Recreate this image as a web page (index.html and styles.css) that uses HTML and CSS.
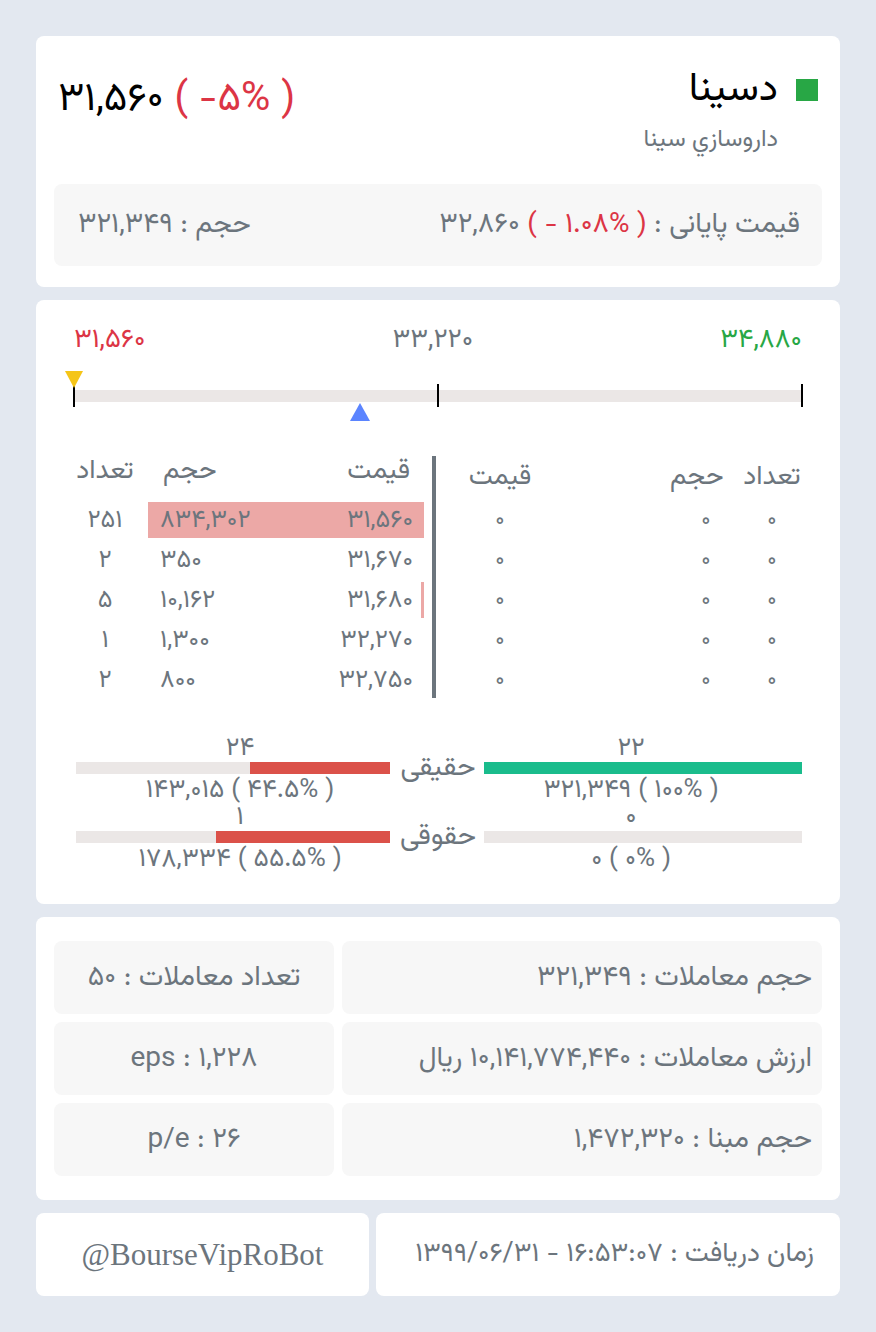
FILE: index.html
```html
<!DOCTYPE html>
<html lang="fa">
<head>
    <meta charset="UTF-8">
    <meta name="viewport" content="width=device-width, initial-scale=1.0">
    <title>دسینا</title>
    <link rel="stylesheet" href="styles.css">
</head>
<body>
    <!-- Symbol header -->
    <section class="card card-head">
        <div class="head-row">
            <div class="last-price" dir="ltr">۳۱,۵۶۰ <span class="red">( -۵% )</span></div>
            <div class="symbol">
                <div class="symbol-title">
                    <span dir="rtl">دسینا</span>
                    <span class="status-dot"></span>
                </div>
                <div class="symbol-name" dir="rtl">داروسازي سينا</div>
            </div>
        </div>
        <div class="close-box">
            <span dir="rtl">حجم : ۳۲۱,۳۴۹</span>
            <span dir="ltr">۳۲,۸۶۰ <span class="red">( - ۱.۰۸% )</span> : قیمت پایانی</span>
        </div>
    </section>

    <!-- Range + order book + buyer types -->
    <section class="card card-book">
        <div class="range-labels">
            <span class="red">۳۱,۵۶۰</span>
            <span>۳۳,۲۲۰</span>
            <span class="green">۳۴,۸۸۰</span>
        </div>
        <div class="range">
            <div class="range-track"></div>
            <span class="tick" style="left: 0%"></span>
            <span class="tick" style="left: 50%"></span>
            <span class="tick" style="left: 100%"></span>
            <span class="marker-last" style="left: 0%"></span>
            <span class="marker-close" style="left: 39.3%"></span>
        </div>

        <div class="book">
            <div class="book-side sell">
                <div class="book-row book-head">
                    <span class="c-count">تعداد</span>
                    <div class="c-bar">
                        <span class="c-vol">حجم</span>
                        <span class="c-price">قیمت</span>
                    </div>
                </div>
                <div class="book-row">
                    <span class="c-count">۲۵۱</span>
                    <div class="c-bar">
                        <span class="fill" style="width: 100%"></span>
                        <span class="c-vol">۸۳۴,۳۰۲</span>
                        <span class="c-price">۳۱,۵۶۰</span>
                    </div>
                </div>
                <div class="book-row">
                    <span class="c-count">۲</span>
                    <div class="c-bar">
                        <span class="fill" style="width: 0%"></span>
                        <span class="c-vol">۳۵۰</span>
                        <span class="c-price">۳۱,۶۷۰</span>
                    </div>
                </div>
                <div class="book-row">
                    <span class="c-count">۵</span>
                    <div class="c-bar">
                        <span class="fill" style="width: 1.2%"></span>
                        <span class="c-vol">۱۰,۱۶۲</span>
                        <span class="c-price">۳۱,۶۸۰</span>
                    </div>
                </div>
                <div class="book-row">
                    <span class="c-count">۱</span>
                    <div class="c-bar">
                        <span class="fill" style="width: 0%"></span>
                        <span class="c-vol">۱,۳۰۰</span>
                        <span class="c-price">۳۲,۲۷۰</span>
                    </div>
                </div>
                <div class="book-row">
                    <span class="c-count">۲</span>
                    <div class="c-bar">
                        <span class="fill" style="width: 0%"></span>
                        <span class="c-vol">۸۰۰</span>
                        <span class="c-price">۳۲,۷۵۰</span>
                    </div>
                </div>
            </div>

            <div class="book-divider"></div>

            <div class="book-side buy">
                <div class="buy-row buy-head">
                    <span class="b-price">قیمت</span>
                    <span></span>
                    <span class="b-vol head-vol">حجم</span>
                    <span class="b-count">تعداد</span>
                </div>
                <div class="buy-row"><span class="b-price">۰</span><span></span><span class="b-vol">۰</span><span class="b-count">۰</span></div>
                <div class="buy-row"><span class="b-price">۰</span><span></span><span class="b-vol">۰</span><span class="b-count">۰</span></div>
                <div class="buy-row"><span class="b-price">۰</span><span></span><span class="b-vol">۰</span><span class="b-count">۰</span></div>
                <div class="buy-row"><span class="b-price">۰</span><span></span><span class="b-vol">۰</span><span class="b-count">۰</span></div>
                <div class="buy-row"><span class="b-price">۰</span><span></span><span class="b-vol">۰</span><span class="b-count">۰</span></div>
            </div>
        </div>

        <div class="holders">
            <div class="holder">
                <span class="h-num h-left">۲۴</span>
                <span class="h-num h-right">۲۲</span>
                <div class="h-bar h-left"><span class="h-fill sell-fill" style="width: 44.5%"></span></div>
                <span class="h-label" dir="rtl">حقیقی</span>
                <div class="h-bar h-right"><span class="h-fill buy-fill" style="width: 100%"></span></div>
                <span class="h-text h-left" dir="ltr">۱۴۳,۰۱۵ ( ۴۴.۵% )</span>
                <span class="h-text h-right" dir="ltr">۳۲۱,۳۴۹ ( ۱۰۰% )</span>
            </div>
            <div class="holder">
                <span class="h-num h-left">۱</span>
                <span class="h-num h-right">۰</span>
                <div class="h-bar h-left"><span class="h-fill sell-fill" style="width: 55.5%"></span></div>
                <span class="h-label" dir="rtl">حقوقی</span>
                <div class="h-bar h-right"><span class="h-fill buy-fill" style="width: 0%"></span></div>
                <span class="h-text h-left" dir="ltr">۱۷۸,۳۳۴ ( ۵۵.۵% )</span>
                <span class="h-text h-right" dir="ltr">۰ ( ۰% )</span>
            </div>
        </div>
    </section>

    <!-- Trade stats -->
    <section class="card card-stats">
        <div class="stat stat-small" dir="rtl">تعداد معاملات : ۵۰</div>
        <div class="stat stat-wide" dir="rtl">حجم معاملات : ۳۲۱,۳۴۹</div>
        <div class="stat stat-small" dir="ltr">eps : ۱,۲۲۸</div>
        <div class="stat stat-wide" dir="rtl">ارزش معاملات : ۱۰,۱۴۱,۷۷۴,۴۴۰ ریال</div>
        <div class="stat stat-small" dir="ltr">p/e : ۲۶</div>
        <div class="stat stat-wide" dir="rtl">حجم مبنا : ۱,۴۷۲,۳۲۰</div>
    </section>

    <!-- Footer -->
    <footer class="foot">
        <div class="card foot-bot">@BourseVipRoBot</div>
        <div class="card foot-time" dir="rtl">زمان دریافت : ۱۶:۵۳:۰۷ - ۱۳۹۹/۰۶/۳۱</div>
    </footer>
</body>
</html>
```

FILE: styles.css
```css
/* General */
* {
    margin: 0;
    padding: 0;
    box-sizing: border-box;
}

body {
    background: #e3e8f0;
    color: #6c757d;
    font-family: 'Vazirmatn', 'Vazir', 'Noto Sans Arabic', 'DejaVu Sans', sans-serif;
    font-size: 28px;
    padding: 36px;
}

.red {
    color: #dc3545;
}

.green {
    color: #28a745;
}

.card {
    background: #fff;
    border-radius: 8px;
    margin-bottom: 13px;
}

/* Header card */
.card-head {
    padding: 32px 18px 21px;
}

.head-row {
    display: flex;
    justify-content: space-between;
    align-items: flex-start;
}

.last-price {
    color: #000;
    font-size: 40px;
    line-height: 44px;
    margin-top: 10px;
    padding-left: 4px;
}

.symbol {
    display: flex;
    flex-direction: column;
    align-items: flex-end;
}

.symbol-title {
    display: flex;
    align-items: center;
    color: #000;
    font-size: 40px;
    line-height: 44px;
}

.status-dot {
    width: 22px;
    height: 22px;
    background: #28a745;
    margin-left: 18px;
    margin-right: 4px;
}

.symbol-name {
    font-size: 24px;
    line-height: 30px;
    margin-top: 13px;
    margin-right: 44px;
}

.close-box {
    margin-top: 29px;
    height: 82px;
    background: #f7f7f7;
    border-radius: 8px;
    padding: 0 22px 0 24px;
    display: flex;
    justify-content: space-between;
    align-items: center;
}

/* Range + book card */
.card-book {
    padding: 26px 38px 31px;
}

.range-labels {
    display: flex;
    justify-content: space-between;
    font-size: 27px;
    line-height: 30px;
}

.range {
    position: relative;
    height: 52px;
    margin-top: 14px;
}

.range-track {
    position: absolute;
    top: 20px;
    left: 0;
    right: 0;
    height: 12px;
    background: #ebe7e6;
}

.tick {
    position: absolute;
    top: 14px;
    width: 2px;
    height: 23px;
    margin-left: -1px;
    background: #000;
}

.marker-last {
    position: absolute;
    top: 1px;
    margin-left: -9px;
    border-left: 9px solid transparent;
    border-right: 9px solid transparent;
    border-top: 17px solid #f5c518;
}

.marker-close {
    position: absolute;
    top: 33px;
    margin-left: -10px;
    border-left: 10px solid transparent;
    border-right: 10px solid transparent;
    border-bottom: 18px solid #5b84ff;
}

/* Order book */
.book {
    margin-top: 34px;
    display: flex;
    padding-bottom: 9px;
    font-size: 25px;
}

.book-side {
    display: flex;
    flex-direction: column;
    gap: 4px;
}

.sell {
    width: 350px;
}

.buy {
    flex: 1;
}

.book-divider {
    width: 4px;
    background: #6c757d;
    margin: 0 8px;
}

.book-row {
    display: flex;
    gap: 12px;
    height: 36px;
    align-items: center;
}

.book-head {
    height: 30px;
    font-size: 27px;
    margin-bottom: 12px;
}

.c-count {
    width: 62px;
    text-align: center;
}

.c-bar {
    position: relative;
    flex: 1;
    height: 100%;
    display: flex;
    justify-content: space-between;
    align-items: center;
    padding: 0 11px 0 12px;
}

.book-head .c-bar {
    padding: 0 14px 0 15px;
}

.fill {
    position: absolute;
    top: 0;
    right: 0;
    bottom: 0;
    background: #eca8a6;
}

.c-vol,
.c-price {
    position: relative;
}

.buy-row {
    display: grid;
    grid-template-columns: 112px 1fr 72px 60px;
    height: 36px;
    align-items: center;
    text-align: center;
    font-size: 22px;
}

.buy-head {
    height: 30px;
    font-size: 27px;
    margin-bottom: 12px;
}

.head-vol {
    text-align: left;
}

/* Real / legal holders */
.holders {
    margin-top: 28px;
    font-size: 26px;
}

.holder {
    display: grid;
    grid-template-columns: 318px 1fr 318px;
    grid-template-rows: 27px 12px 30px;
    text-align: center;
}

.h-num {
    grid-row: 1;
    line-height: 22px;
    margin-top: 3px;
}

.h-num.h-left,
.h-text.h-left {
    padding-left: 14px;
}

.h-num.h-right,
.h-text.h-right {
    padding-right: 24px;
}

.h-left {
    grid-column: 1;
}

.h-right {
    grid-column: 3;
}

.h-bar {
    grid-row: 2;
    height: 12px;
    background: #ebe7e6;
    display: flex;
    justify-content: flex-end;
}

.h-bar.h-left {
    margin-left: 2px;
    margin-right: 2px;
}

.h-bar.h-right {
    justify-content: flex-start;
}

.h-fill {
    height: 100%;
}

.sell-fill {
    background: #db5149;
}

.buy-fill {
    background: #1abc8c;
}

.h-label {
    grid-row: 2;
    grid-column: 2;
    font-size: 28px;
    line-height: 12px;
}

.h-text {
    grid-row: 3;
    line-height: 24px;
    margin-top: 5px;
}

/* Stats card */
.card-stats {
    padding: 24px 18px;
    display: grid;
    grid-template-columns: 280px 1fr;
    grid-auto-rows: 73px;
    gap: 8px;
}

.stat {
    background: #f7f7f7;
    border-radius: 8px;
    display: flex;
    align-items: center;
}

.stat-small {
    justify-content: center;
}

.stat-wide {
    padding: 0 10px;
}

/* Footer */
.foot {
    display: flex;
    gap: 7px;
}

.foot .card {
    height: 83px;
    margin-bottom: 0;
    display: flex;
    align-items: center;
}

.foot-bot {
    width: 333px;
    justify-content: center;
    font-family: 'Liberation Serif', serif;
    font-size: 31px;
}

.foot-time {
    flex: 1;
    padding: 0 26px;
    font-size: 27px;
    white-space: nowrap;
}
```
